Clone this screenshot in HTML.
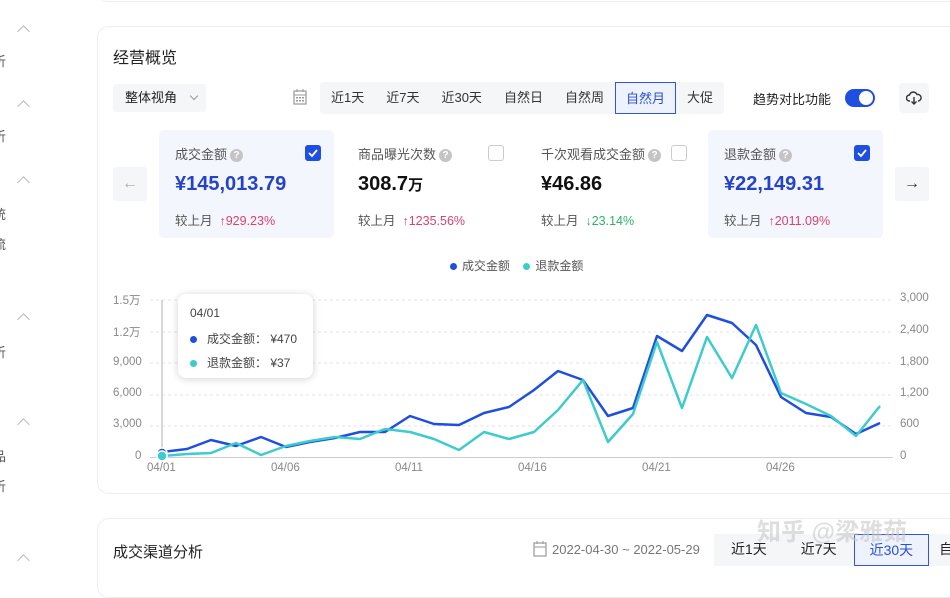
<!DOCTYPE html>
<html><head><meta charset="utf-8"><style>
*{box-sizing:border-box;margin:0;padding:0}
body{width:950px;height:569px;overflow:hidden;background:#fff;font-family:"Liberation Sans","Noto Sans CJK SC",sans-serif;color:#333;position:relative}
.a{position:absolute}
.card{position:absolute;border:1px solid #eceef2;border-radius:12px;background:#fff}
.chev{position:absolute;left:19px;width:9px;height:9px;border-left:1px solid #bbb;border-top:1px solid #bbb;transform:rotate(45deg)}
.side{position:absolute;left:-7px;font-size:13px;color:#555}
.tabs{position:absolute;top:82px;left:320px;height:32px;background:#f5f6f8;border-radius:3px;display:flex;font-size:13px;color:#333;white-space:nowrap}
.tabs div{padding:0 11px;line-height:32px}
.tabs .on{border:1px solid #3355dd;color:#2a4fd6;background:#eef2fd;padding:0 10px}
.met{position:absolute;top:130px;width:175px;height:108px;border-radius:5px}
.met .t{position:absolute;left:16px;top:14px;font-size:13px;color:#555}
.q{display:inline-block;width:13px;height:13px;border-radius:50%;background:#c4c4c4;color:#fff;font-size:10px;text-align:center;line-height:13px;vertical-align:1px;margin-left:3px;font-weight:bold}
.met .v{position:absolute;left:16px;top:43px;font-size:20px;font-weight:bold;color:#111}
.met .c{position:absolute;left:16px;top:80px;font-size:12.5px;color:#555}
.up{color:#d9426b}.dn{color:#2fb06a}
.cb{position:absolute;top:15px;width:16px;height:16px;border:1px solid #ccc;border-radius:3px;background:#fff}
.cb.on{background:#1f4fe0;border-color:#1f4fe0}
.ax{position:absolute;font-size:11.5px;color:#888}
</style></head><body>
<div class="card" style="left:97px;top:-20px;width:880px;height:22px"></div>
<div class="chev" style="top:27px"></div><div class="side" style="top:51px">析</div>
<div class="chev" style="top:102px"></div><div class="side" style="top:126px">析</div>
<div class="chev" style="top:178px"></div><div class="side" style="top:204px">统</div><div class="side" style="top:234px">流</div>
<div class="chev" style="top:315px"></div><div class="side" style="top:342px">析</div>
<div class="chev" style="top:420px"></div><div class="side" style="top:446px">品</div><div class="side" style="top:476px">析</div>
<div class="chev" style="top:556px"></div>

<div class="card" style="left:97px;top:26px;width:880px;height:468px"></div>
<div class="a" style="left:113px;top:44px;font-size:16px;color:#222">经营概览</div>
<div class="a" style="left:113px;top:84px;width:93px;height:28px;background:#f5f6f8;border-radius:3px;font-size:13px;line-height:28px;padding-left:12px;color:#222">整体视角 <span style="display:inline-block;width:6px;height:6px;border-right:1px solid #999;border-bottom:1px solid #999;transform:rotate(45deg);margin-left:10px;vertical-align:3px"></span></div>
<svg class="a" style="left:293px;top:89px" width="14" height="16" viewBox="0 0 14 16"><rect x="1" y="2" width="12" height="13" fill="none" stroke="#999" stroke-width="1.2"/><line x1="1" y1="6" x2="13" y2="6" stroke="#999"/><line x1="4" y1="0" x2="4" y2="3" stroke="#999"/><line x1="10" y1="0" x2="10" y2="3" stroke="#999"/><g fill="#999"><rect x="3" y="8" width="2" height="1.5"/><rect x="6" y="8" width="2" height="1.5"/><rect x="9" y="8" width="2" height="1.5"/><rect x="3" y="11" width="2" height="1.5"/><rect x="6" y="11" width="2" height="1.5"/><rect x="9" y="11" width="2" height="1.5"/></g></svg>
<div class="tabs"><div>近1天</div><div>近7天</div><div>近30天</div><div>自然日</div><div>自然周</div><div class="on">自然月</div><div>大促</div></div>
<div class="a" style="left:753px;top:89px;font-size:13px;color:#222">趋势对比功能</div>
<div class="a" style="left:845px;top:89px;width:30px;height:18px;border-radius:9px;background:#1f4fe0"><div class="a" style="right:2px;top:2px;width:14px;height:14px;border-radius:50%;background:#fff"></div></div>
<div class="a" style="left:899px;top:83px;width:30px;height:30px;background:#f5f6f8;border-radius:4px"></div>
<svg class="a" style="left:906px;top:91px" width="16" height="14" viewBox="0 0 16 14"><path d="M4 10H3.5A3 3 0 0 1 3.5 4 4 4 0 0 1 11 3.5 3 3 0 0 1 12.5 10H12" fill="none" stroke="#333" stroke-width="1.4"/><path d="M8 6v7M5.5 10.5 8 13l2.5-2.5" fill="none" stroke="#333" stroke-width="1.4"/></svg>

<div class="a" style="left:113px;top:167px;width:34px;height:34px;background:#f5f6f8;border-radius:3px;color:#aaa;font-size:16px;text-align:center;line-height:34px">←</div>
<div class="a" style="left:895px;top:167px;width:34px;height:34px;background:#f5f6f8;border-radius:3px;color:#333;font-size:16px;text-align:center;line-height:34px">→</div>

<div class="met" style="left:159px;background:#f3f6fd"><div class="t">成交金额<span class="q">?</span></div><div class="cb on" style="left:146px"><svg width="14" height="14"><path d="M3 7l3 3 5-6" fill="none" stroke="#fff" stroke-width="1.8"/></svg></div><div class="v" style="color:#2443c8">¥145,013.79</div><div class="c">较上月 <span class="up">&nbsp;↑929.23%</span></div></div>
<div class="met" style="left:342px"><div class="t">商品曝光次数<span class="q">?</span></div><div class="cb" style="left:146px"></div><div class="v">308.7<span style="font-size:15px">万</span></div><div class="c">较上月 <span class="up">&nbsp;↑1235.56%</span></div></div>
<div class="met" style="left:525px"><div class="t">千次观看成交金额<span class="q">?</span></div><div class="cb" style="left:146px"></div><div class="v">¥46.86</div><div class="c">较上月 <span class="dn">&nbsp;↓23.14%</span></div></div>
<div class="met" style="left:708px;background:#f3f6fd"><div class="t">退款金额<span class="q">?</span></div><div class="cb on" style="left:146px"><svg width="14" height="14"><path d="M3 7l3 3 5-6" fill="none" stroke="#fff" stroke-width="1.8"/></svg></div><div class="v" style="color:#2443c8">¥22,149.31</div><div class="c">较上月 <span class="up">&nbsp;↑2011.09%</span></div></div>

<div class="a" style="left:450px;top:257px;font-size:12px;color:#555"><span style="display:inline-block;width:7px;height:7px;border-radius:50%;background:#1f4fe0;margin-right:5px"></span>成交金额 &nbsp;&nbsp;&nbsp;<span style="display:inline-block;width:7px;height:7px;border-radius:50%;background:#3ecbcb;margin-right:5px"></span>退款金额</div>

<div class="ax" style="left:113px;top:292px">1.5万</div>
<div class="ax" style="left:113px;top:324px">1.2万</div>
<div class="ax" style="left:113px;top:356px">9,000</div>
<div class="ax" style="left:113px;top:387px">6,000</div>
<div class="ax" style="left:113px;top:418px">3,000</div>
<div class="ax" style="left:135px;top:450px">0</div>
<div class="ax" style="left:900px;top:292px">3,000</div>
<div class="ax" style="left:900px;top:324px">2,400</div>
<div class="ax" style="left:900px;top:356px">1,800</div>
<div class="ax" style="left:900px;top:387px">1,200</div>
<div class="ax" style="left:900px;top:418px">600</div>
<div class="ax" style="left:900px;top:450px">0</div>
<div class="ax" style="left:147px;top:462px">04/01</div>
<div class="ax" style="left:271px;top:462px">04/06</div>
<div class="ax" style="left:395px;top:462px">04/11</div>
<div class="ax" style="left:518px;top:462px">04/16</div>
<div class="ax" style="left:642px;top:462px">04/21</div>
<div class="ax" style="left:766px;top:462px">04/26</div>

<svg class="a" style="left:0;top:0" width="950" height="569">
<g stroke="#e3e3e3" stroke-dasharray="3,3"><line x1="150" y1="300" x2="893" y2="300"/><line x1="150" y1="332" x2="893" y2="332"/><line x1="150" y1="363" x2="893" y2="363"/><line x1="150" y1="395" x2="893" y2="395"/><line x1="150" y1="426" x2="893" y2="426"/></g>
<line x1="150" y1="457.5" x2="893" y2="457.5" stroke="#ccc"/>
<line x1="162" y1="300" x2="162" y2="457" stroke="#ccc" stroke-width="1.5"/>
<polyline fill="none" stroke="#1f4fe0" stroke-width="2.5" stroke-linejoin="round" points="162,452 187,449 211,440 236,446 261,437 286,447 310,442 335,438 360,432 385,432 410,416 434,424 459,425 484,413 509,407 534,390 558,371 583,380 608,416 633,408 657,336 682,351 707,315 732,323 756,345 781,397 806,413 831,417 856,434 880,423"/>
<polyline fill="none" stroke="#3ecbcb" stroke-width="2.5" stroke-linejoin="round" points="162,456 187,454 211,453 236,443 261,455 286,446 310,441 335,437 360,439 385,429 410,432 434,439 459,450 484,432 509,439 534,432 558,410 583,380 608,442 633,414 657,342 682,408 707,337 732,378 756,325 781,393 806,404 831,416 856,436 880,406"/>
<circle cx="162" cy="453" r="5" fill="#1f4fe0" stroke="#fff" stroke-width="1.5"/>
<circle cx="162" cy="456" r="5" fill="#3ecbcb" stroke="#fff" stroke-width="1.5"/>
</svg>

<div class="a" style="left:178px;top:294px;width:135px;height:84px;background:#fff;border-radius:8px;box-shadow:0 1px 8px rgba(0,0,0,.18);font-size:12px;color:#444">
<div class="a" style="left:12px;top:12px">04/01</div>
<div class="a" style="left:12px;top:36px;white-space:nowrap"><span style="display:inline-block;width:7px;height:7px;border-radius:50%;background:#1f4fe0;margin-right:10px"></span>成交金额： ¥470</div>
<div class="a" style="left:12px;top:60px;white-space:nowrap"><span style="display:inline-block;width:7px;height:7px;border-radius:50%;background:#3ecbcb;margin-right:10px"></span>退款金额： ¥37</div>
</div>

<div class="card" style="left:97px;top:518px;width:880px;height:80px"></div>
<div class="a" style="left:113px;top:541px;font-size:15px;color:#222">成交渠道分析</div>
<svg class="a" style="left:533px;top:541px" width="14" height="16" viewBox="0 0 14 16"><rect x="1" y="2" width="12" height="13" fill="none" stroke="#999" stroke-width="1.2"/><line x1="1" y1="6" x2="13" y2="6" stroke="#999"/><line x1="4" y1="0" x2="4" y2="3" stroke="#999"/><line x1="10" y1="0" x2="10" y2="3" stroke="#999"/></svg>
<div class="a" style="left:552px;top:542px;font-size:13px;color:#777;white-space:nowrap">2022-04-30 ~ 2022-05-29</div>
<div class="a" style="left:714px;top:534px;width:260px;height:32px;background:#f5f6f8;display:flex;font-size:14px;line-height:30px;color:#222;white-space:nowrap">
<div style="padding:0 17px">近1天</div><div style="padding:0 17px">近7天</div><div style="padding:0 15px;border:1px solid #3355dd;color:#2a4fd6;background:#eef2fd">近30天</div><div style="padding:0 10px">自</div></div>
<div class="a" style="left:757px;top:512px;font-size:24px;color:rgba(200,200,200,.6);font-weight:bold;white-space:nowrap">知乎 @梁雅茹</div>
</body></html>
